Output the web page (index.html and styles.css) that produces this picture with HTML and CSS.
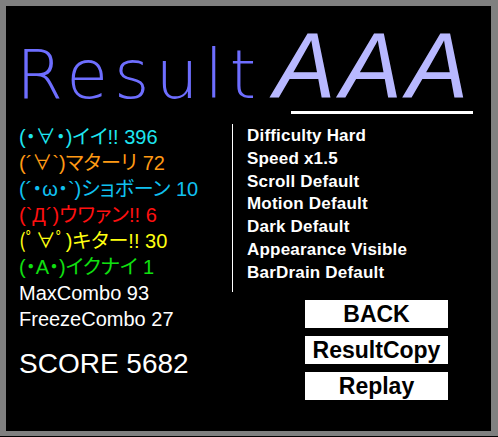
FILE: index.html
```html
<!DOCTYPE html>
<html>
<head>
<meta charset="utf-8">
<link rel="stylesheet" href="styles.css">
</head>
<body>
<div class="frame">
  <div class="title">
    <span class="result">Result</span>
    <span class="rank">AAA</span>
  </div>
  <div class="rule"></div>
  <div class="main">
    <div class="left">
      <div class="judge c1">(・∀・)イイ!! 396</div>
      <div class="judge c2">(´∀`)マターリ 72</div>
      <div class="judge c3">(´・ω・`)ショボーン 10</div>
      <div class="judge c4">(`Д´)ウワァン!! 6</div>
      <div class="judge c5">(ﾟ∀ﾟ)キター!! 30</div>
      <div class="judge c6">(・A・)イクナイ 1</div>
      <div class="judge">MaxCombo 93</div>
      <div class="judge">FreezeCombo 27</div>
      <div class="score">SCORE 5682</div>
    </div>
    <div class="divider"></div>
    <div class="right">
      <div class="settings">
        <div>Difficulty Hard</div>
        <div>Speed x1.5</div>
        <div>Scroll Default</div>
        <div>Motion Default</div>
        <div>Dark Default</div>
        <div>Appearance Visible</div>
        <div>BarDrain Default</div>
      </div>
      <div class="buttons">
        <div class="btn">BACK</div>
        <div class="btn">ResultCopy</div>
        <div class="btn">Replay</div>
      </div>
    </div>
  </div>
</div>
<div class="edge"></div>
</body>
</html>
```

FILE: styles.css
```css
html, body {
  margin: 0;
  padding: 0;
  background: #808080;
}
body {
  width: 498px;
  height: 437px;
  overflow: hidden;
}
.frame {
  margin: 6px 0 0 6px;
  width: 485px;
  height: 425px;
  background: #000;
  display: flex;
  flex-direction: column;
}
.edge {
  margin-top: 5px;
  height: 1px;
  background: #000;
}
.title {
  display: flex;
  align-items: baseline;
  height: 98px;
  padding-top: 14px;
  line-height: 1;
  padding-left: 10px;
  box-sizing: border-box;
}
.result {
  font-family: "DejaVu Sans", sans-serif;
  font-weight: 200;
  font-size: 68px;
  letter-spacing: 6px;
  color: #6e6eff;
  margin-top: 16px;
}
.rank {
  font-family: "Liberation Sans", Arial, sans-serif;
  font-style: italic;
  font-size: 92px;
  letter-spacing: 5px;
  color: #b8b8ff;
  margin-left: 12px;
}
.rule {
  margin: 7px 0 0 285px;
  width: 182px;
  height: 3px;
  background: #fff;
}
.main {
  display: flex;
  margin-top: 10px;
}
.left {
  width: 213px;
  padding-left: 13px;
  font-family: "Liberation Sans", "Noto Sans CJK JP", sans-serif;
  font-feature-settings: "palt";
}
.judge {
  font-size: 20px;
  line-height: 26px;
  color: #fff;
  white-space: nowrap;
}
.c1 { color: #1ee6f0; }
.c2 { color: #ff9a14; }
.c3 { color: #10c0f0; }
.c4 { color: #ff1010; }
.c5 { color: #ffff10; }
.c6 { color: #10e010; }
.score {
  font-size: 28px;
  color: #fff;
  margin-top: 16px;
}
.divider {
  width: 1px;
  height: 168px;
  background: #fff;
}
.right {
  padding-left: 14px;
  font-family: "Liberation Sans", Arial, sans-serif;
}
.settings {
  color: #fff;
  font-weight: bold;
  font-size: 17px;
  line-height: 22.8px;
  padding-top: 1px;
  letter-spacing: 0.2px;
}
.buttons {
  margin: 15px 0 0 58px;
  display: flex;
  flex-direction: column;
  gap: 8px;
}
.btn {
  width: 143px;
  height: 28px;
  background: #fff;
  color: #000;
  font-weight: bold;
  font-size: 23px;
  line-height: 29px;
  text-align: center;
}
```
